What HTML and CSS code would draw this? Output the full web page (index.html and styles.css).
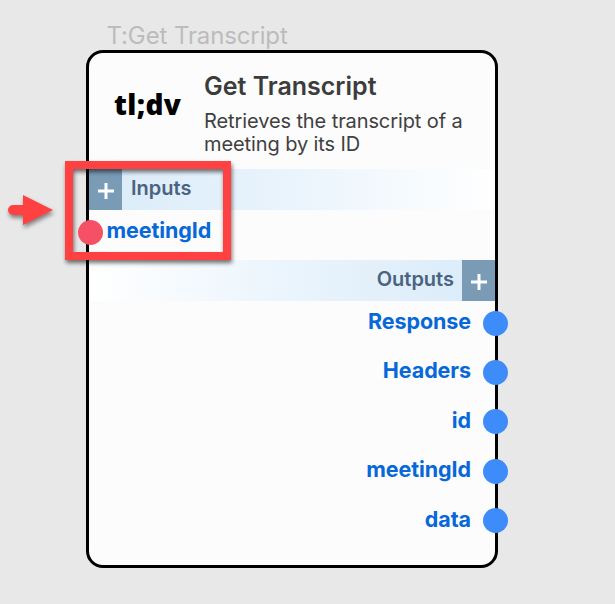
FILE: index.html
```html
<!DOCTYPE html>
<html lang="en">
<head>
<meta charset="utf-8">
<title>Get Transcript</title>
<link rel="stylesheet" href="styles.css">
</head>
<body>
<main class="canvas">
  <div class="node-name">T:Get Transcript</div>
  <article class="node">
    <header class="head">
      <div class="logo">tl;dv</div>
      <div class="info">
        <h1 class="title">Get Transcript</h1>
        <p class="desc">Retrieves the transcript of a meeting by its ID</p>
      </div>
    </header>
    <div class="bar inputs">
      <span class="add"><svg width="18" height="18" viewBox="0 0 18 18"><path d="M9 1v16M1 9h16"/></svg></span>
      <span class="bar-label">Inputs</span>
    </div>
    <div class="port in"><span>meetingId</span><i class="dot"></i></div>
    <div class="bar outputs">
      <span class="bar-label">Outputs</span>
      <span class="add"><svg width="18" height="18" viewBox="0 0 18 18"><path d="M9 1v16M1 9h16"/></svg></span>
    </div>
    <div class="ports">
      <div class="port out"><span>Response</span><i class="dot"></i></div>
      <div class="port out"><span>Headers</span><i class="dot"></i></div>
      <div class="port out"><span>id</span><i class="dot"></i></div>
      <div class="port out"><span>meetingId</span><i class="dot"></i></div>
      <div class="port out"><span>data</span><i class="dot"></i></div>
    </div>
  </article>
  <div class="highlight"></div>
  <svg class="arrow" width="60" height="50" viewBox="0 0 60 50"><path d="M13 15H23V5L53 20L23 35V25H13A5 5 0 0 1 13 15Z"/></svg>
</main>
</body>
</html>
```

FILE: styles.css
```css
* { box-sizing: border-box; }
body { margin: 0; background: #e8e8e8; font-family: Inter, sans-serif; }
.canvas { position: relative; width: 615px; height: 604px; padding: 20px 0 0 86px; overflow: hidden; }
.node-name { height: 30px; padding-left: 20.5px; font-size: 24px; letter-spacing: -0.12px; line-height: 31px; color: #bcbcbc; white-space: nowrap; }
.node { width: 412px; height: 518px; border: 3.5px solid #000; border-radius: 17px; background: #fcfcfc; }
.head { display: flex; height: 116px; }
.logo { width: 115px; padding: 33px 0 0 25px; font: 900 28px/36px "Noto Sans", sans-serif; letter-spacing: 0.4px; color: #000; white-space: nowrap; }
.info { width: 280px; padding-top: 18px; }
.title { margin: 0; font-size: 25px; line-height: 30px; font-weight: 600; color: #3c3c3c; }
.desc { margin: 9px 0 0; font-size: 20px; line-height: 23px; letter-spacing: -0.1px; color: #404040; }
.bar { display: flex; height: 41px; }
.inputs { background: linear-gradient(90deg, #d9ebf8, #e8f3fc 45%, #fff); }
.outputs { justify-content: flex-end; background: linear-gradient(270deg, #d9ebf8, #e8f3fc 45%, #fff); }
.add { display: flex; align-items: center; justify-content: center; width: 33px; padding-top: 2px; background: #799bb6; }
.add path { stroke: #fff; stroke-width: 3; fill: none; }
.inputs .add { padding-left: 1px; }
.bar-label { padding: 0 8px 0 9px; font-size: 20px; line-height: 38px; font-weight: 600; color: #4a6380; }
.port { position: relative; display: flex; height: 49.4px; font-size: 21.5px; line-height: 41px; font-weight: 700; letter-spacing: -0.08px; color: #0768d8; }
.in { height: 50px; padding-left: 17.5px; }
.out { justify-content: flex-end; padding-right: 24px; }
.dot { position: absolute; top: 9.5px; width: 25px; height: 25px; border-radius: 50%; background: #3e8bfa; }
.in .dot { left: -11px; background: #f65065; }
.out .dot { right: -13px; }
.highlight { position: absolute; left: 65px; top: 161px; width: 166px; height: 99px; border: 8px solid #ff4141; filter: drop-shadow(1px 3px 2px rgba(0,0,0,.55)); }
.arrow { position: absolute; left: 0; top: 190px; fill: #ff4141; filter: drop-shadow(1px 3px 2px rgba(0,0,0,.45)); }
```
